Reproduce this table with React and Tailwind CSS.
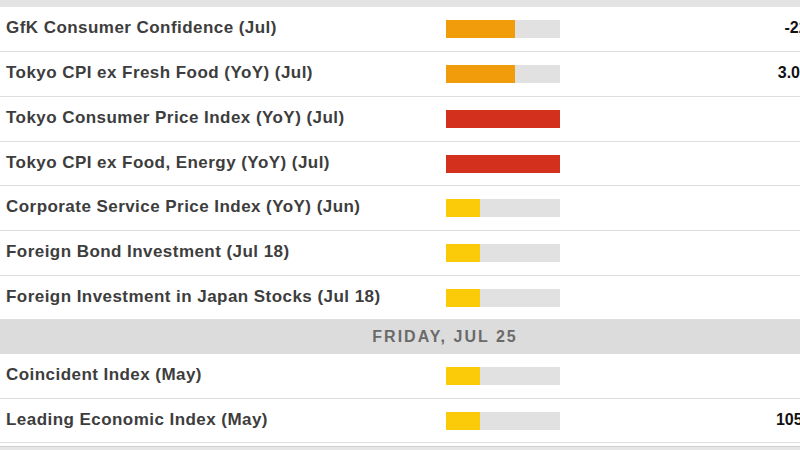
import React from 'react';

// Economic calendar rows (cropped view of a wider table)
const rows = [
  { name: 'GfK Consumer Confidence (Jul)', level: 'medium', value: '-22', h: 'h-[45px]' },
  { name: 'Tokyo CPI ex Fresh Food (YoY) (Jul)', level: 'medium', value: '3.0%', h: 'h-[45px]' },
  { name: 'Tokyo Consumer Price Index (YoY) (Jul)', level: 'high', value: '', h: 'h-[45px]' },
  { name: 'Tokyo CPI ex Food, Energy (YoY) (Jul)', level: 'high', value: '', h: 'h-[44px]' },
  { name: 'Corporate Service Price Index (YoY) (Jun)', level: 'low', value: '', h: 'h-[45px]' },
  { name: 'Foreign Bond Investment (Jul 18)', level: 'low', value: '', h: 'h-[45px]' },
  { name: 'Foreign Investment in Japan Stocks (Jul 18)', level: 'low', value: '', h: 'h-[44px]' },
];

const friday = [
  { name: 'Coincident Index (May)', level: 'low', value: '', h: 'h-[45px]' },
  { name: 'Leading Economic Index (May)', level: 'low', value: '105.3', h: 'h-[44px]' },
];

const ImpactBar = ({ level }) => {
  if (level === 'high') {
    return <div className="h-[18px] w-[114px] shrink-0 bg-[#d3311d]" />;
  }
  return (
    <div className="h-[18px] w-[114px] shrink-0 bg-[#e1e1e1] flex">
      {level === 'medium' ? (
        <div className="h-full w-[69px] bg-[#f09c0b]" />
      ) : (
        <div className="h-full w-[34px] bg-[#fbcb0a]" />
      )}
    </div>
  );
};

const Row = ({ row }) => (
  <div className={`${row.h} flex items-center border-b border-[#dedede] bg-white`}>
    <div className="w-[446px] shrink-0 pl-[6px] pb-[2px] text-[17px] font-bold tracking-[0.45px] text-[#3d3d3d] whitespace-nowrap">
      {row.name}
    </div>
    <ImpactBar level={row.level} />
    <div className="w-[206px] shrink-0" />
    <div className="w-[60px] shrink-0 text-center pb-[2px] text-[16px] font-bold text-[#111] whitespace-nowrap">
      {row.value}
    </div>
  </div>
);

export default function App() {
  return (
    <div className="w-[800px] h-[450px] overflow-hidden bg-white" style={{ fontFamily: '"Liberation Sans", Arial, sans-serif' }}>
      <div className="w-[890px]">
        <div className="h-[7px] bg-[#e3e3e3]" />
        {rows.map((r) => (
          <Row key={r.name} row={r} />
        ))}
        <div className="h-[34px] bg-[#dcdcdc] flex items-center justify-center text-[16px] font-bold tracking-[2px] text-[#6a6a6a]">
          FRIDAY, JUL 25
        </div>
        {friday.map((r) => (
          <Row key={r.name} row={r} />
        ))}
        <div className="h-[3px] bg-white" />
        <div className="h-[10px] bg-[#e6e6e6] border-t border-[#cfcfcf]" />
      </div>
    </div>
  );
}
